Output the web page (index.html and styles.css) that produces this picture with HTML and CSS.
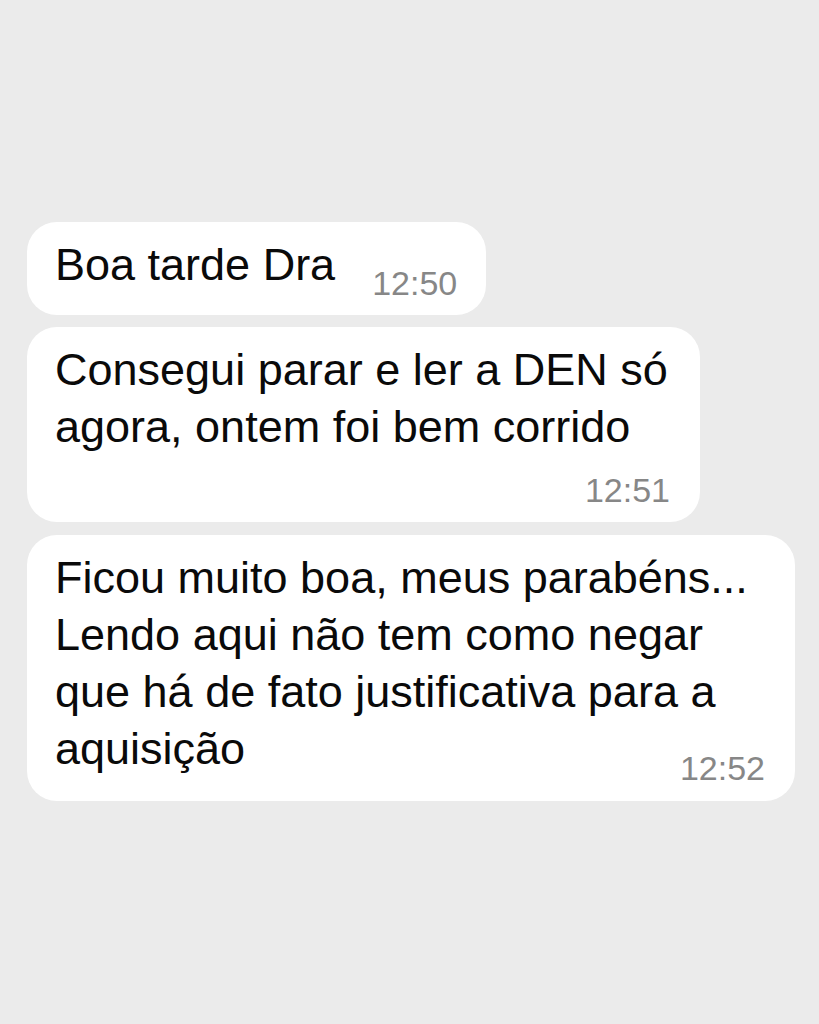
FILE: index.html
```html
<!DOCTYPE html>
<html lang="pt">
<head>
<meta charset="utf-8">
<title>Conversa</title>
<link rel="stylesheet" href="styles.css">
</head>
<body>
<main class="chat">
  <div class="bubble bubble-inline">
    <p class="msg">Boa tarde Dra</p>
    <span class="time">12:50</span>
  </div>
  <div class="bubble bubble-wide-2">
    <p class="msg">Consegui parar e ler a DEN só<br>agora, ontem foi bem corrido</p>
    <span class="time time-below">12:51</span>
  </div>
  <div class="bubble bubble-wide-3">
    <p class="msg">Ficou muito boa, meus parabéns...<br>Lendo aqui não tem como negar<br>que há de fato justificativa para a<br>aquisição</p>
    <span class="time time-overlap">12:52</span>
  </div>
</main>
</body>
</html>
```

FILE: styles.css
```css
* {
  box-sizing: border-box;
}

html, body {
  margin: 0;
  padding: 0;
  background: #ebebeb;
}

body {
  width: 819px;
  height: 1024px;
  font-family: "Liberation Sans", Arial, Helvetica, sans-serif;
  color: #0a0a0a;
}

.chat {
  display: flex;
  flex-direction: column;
  align-items: flex-start;
  gap: 12px;
  padding: 222px 0 0 27px;
}

.bubble {
  background: #ffffff;
  border-radius: 30px;
  padding: 14px 28px 15px 28px;
}

.msg {
  margin: 0;
  font-size: 45px;
  line-height: 57px;
  white-space: nowrap;
}

.time {
  display: block;
  font-size: 34px;
  line-height: 34px;
  color: #878787;
  white-space: nowrap;
}

.bubble-inline {
  display: flex;
  align-items: flex-end;
  gap: 37px;
  padding-right: 29px;
}

.bubble-inline .msg {
  margin-bottom: 7px;
}

.bubble-wide-2 {
  width: 673px;
  padding-right: 30px;
}

.bubble-wide-3 {
  width: 768px;
  padding-right: 30px;
  margin-top: 1px;
  padding-bottom: 16px;
}

.time-below {
  text-align: right;
  margin-top: 18px;
}

.time-overlap {
  text-align: right;
  margin-top: -26px;
}
```
